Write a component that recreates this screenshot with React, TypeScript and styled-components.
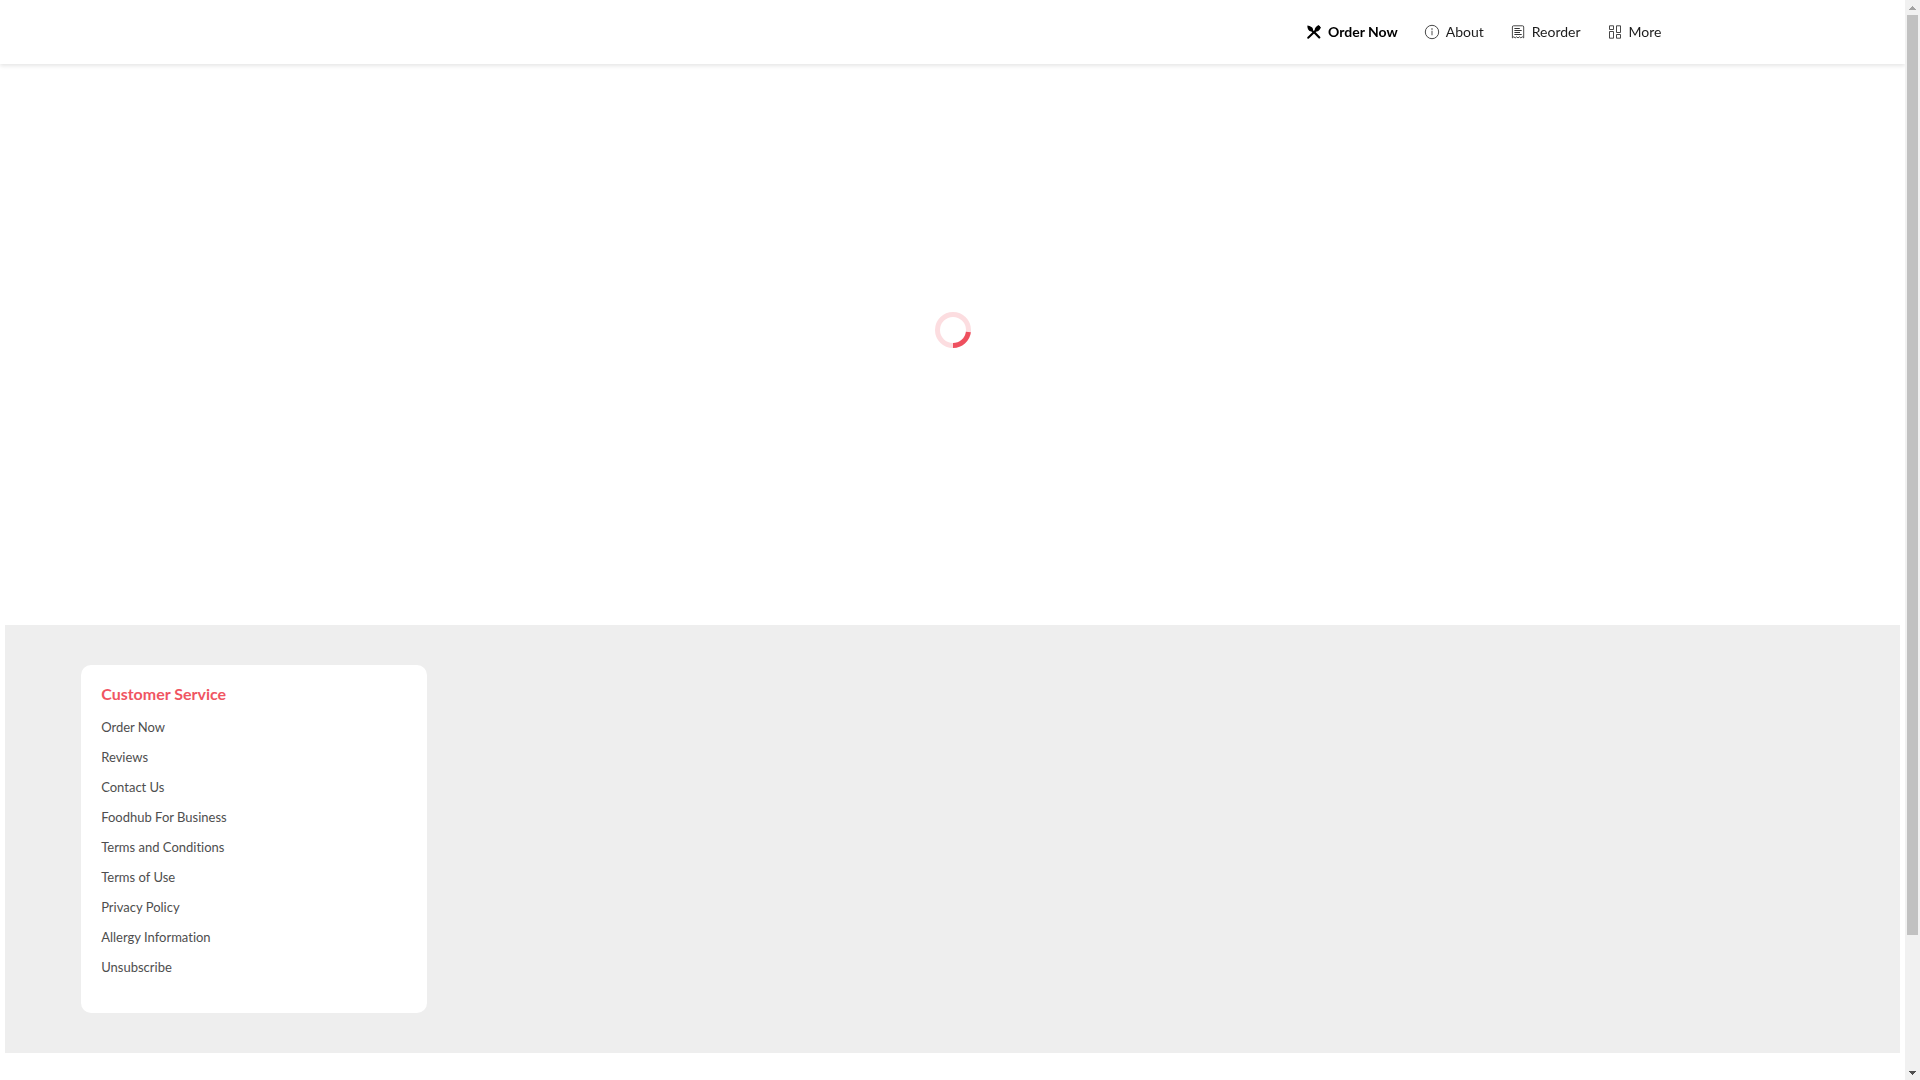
import React, { useEffect, useRef, useState } from "react";
import styled, { createGlobalStyle, keyframes } from "styled-components";

const GlobalStyle = createGlobalStyle`
  *, *::before, *::after { box-sizing: border-box; }
  body {
    margin: 0;
    background: #fff;
    font-family: Lato, "Open Sans", sans-serif;
    font-variant-ligatures: none;
  }
`;

const Shell = styled.div`
  display: grid;
  grid-template-columns: minmax(0, 1fr) 15px;
  height: 100vh;
`;

const Page = styled.div`
  display: flex;
  flex-direction: column;
  overflow-y: auto;
  scrollbar-width: none;
`;

const Header = styled.header`
  flex: none;
  position: sticky;
  top: 0;
  background: #fff;
  box-shadow: 0 2px 4px rgba(0, 0, 0, 0.1);
`;

const Nav = styled.nav`
  display: flex;
  align-items: center;
  justify-content: flex-end;
  gap: 26px;
  max-width: 1440px;
  height: 64px;
  margin: 0 auto;
  padding: 0 11px;
`;

const NavLink = styled.a<{ $active?: boolean }>`
  display: flex;
  align-items: center;
  gap: 6px;
  color: ${(p) => (p.$active ? "#000" : "#1c1c1c")};
  font-size: 14px;
  font-weight: ${(p) => (p.$active ? 700 : 400)};
  line-height: 20px;
  text-decoration: none;
`;

const Icon = styled.svg`
  display: block;
  width: 16px;
  height: 16px;
  fill: none;
  stroke: #333;
  stroke-width: 1;
`;

const Main = styled.main`
  flex: none;
  display: flex;
  justify-content: center;
  height: 561px;
  padding-top: 248px;
`;

const turn = keyframes`
  to { transform: rotate(360deg); }
`;

const Spinner = styled.svg`
  width: 36px;
  height: 36px;
  fill: none;
  stroke-width: 5;
  animation: ${turn} 1s linear infinite paused;
`;

const Footer = styled.footer`
  flex: none;
  margin: 0 5px 180px;
  padding: 40px 4%;
  background: #eee;
`;

const Card = styled.section`
  width: 346px;
  max-width: 100%;
  padding: 15px 20px 31px;
  border-radius: 10px;
  background: #fff;
`;

const CardTitle = styled.h2`
  margin: 0 0 4px;
  color: #f05562;
  font-size: 16px;
  font-weight: 700;
  line-height: 28px;
`;

const LinkList = styled.ul`
  margin: 0;
  padding: 0;
  list-style: none;
`;

const FooterLink = styled.a`
  display: block;
  color: #4e4e4e;
  font-size: 13px;
  line-height: 30px;
  text-decoration: none;
`;

const Bar = styled.div`
  display: grid;
  grid-template-rows: 15px minmax(0, 1fr) 15px;
  background: #f1f1f1;
`;

const BarButton = styled.button`
  display: flex;
  align-items: center;
  justify-content: center;
  padding: 0;
  border: 0;
  background: transparent;
`;

const Track = styled.div`
  display: flex;
  flex-direction: column;
  align-items: center;
`;

const Before = styled.div`
  flex: none;
`;

const Thumb = styled.div`
  flex: none;
  width: 11px;
  background: #c1c1c1;
`;

const links = [
  "Order Now",
  "Reviews",
  "Contact Us",
  "Foodhub For Business",
  "Terms and Conditions",
  "Terms of Use",
  "Privacy Policy",
  "Allergy Information",
  "Unsubscribe",
];

export default function App() {
  const page = useRef<HTMLDivElement>(null);
  const [scroll, setScroll] = useState({ size: 100, top: 0 });

  const measure = () => {
    const el = page.current;
    if (!el) return;
    setScroll({
      size: (el.clientHeight / el.scrollHeight) * 100,
      top: (el.scrollTop / el.scrollHeight) * 100,
    });
  };

  useEffect(() => {
    measure();
    window.addEventListener("resize", measure);
    return () => window.removeEventListener("resize", measure);
  }, []);

  const step = (by: number) => page.current?.scrollBy({ top: by });

  return (
    <Shell>
      <GlobalStyle />
      <Page ref={page} onScroll={measure}>
        <Header>
          <Nav>
            <NavLink href="#order" $active>
              <Icon viewBox="0 0 16 16" aria-hidden="true">
                <g stroke="#000" strokeLinecap="round">
                  <path d="M8 8L13.3 13.4" strokeWidth="2.2" />
                  <path d="M2.2 13.7L10.5 5.8" strokeWidth="2" />
                  <path d="M1.4 1.6L3.6 1.9L6.2 3.4Q7.4 4.8 7 6.2L8.4 7.6L7 9L5.4 7.5Q3.2 7.4 2 5.2Q1.2 3.4 1.4 1.6Z" fill="#000" stroke="none" />
                  <path d="M9 7.2Q8 4.7 9.9 3L12.4 1L13.2 1.8L14 1.9L14.1 2.7L15 3.5L13.4 5.9Q11.4 8.2 9 7.2Z" fill="#000" stroke="none" />
                </g>
              </Icon>
              Order Now
            </NavLink>
            <NavLink href="#about">
              <Icon viewBox="0 0 16 16" aria-hidden="true">
                <circle cx="8" cy="8" r="6.7" strokeWidth="0.9" />
                <path d="M8 4.3V5.7" stroke="#777" strokeWidth="1.6" />
                <path d="M8 6.7V11.3" stroke="#888" strokeWidth="1.5" />
              </Icon>
              About
            </NavLink>
            <NavLink href="#reorder">
              <Icon viewBox="0 0 16 16" aria-hidden="true">
                <path
                  strokeWidth="0.9"
                  d="M3.5 1.8H12.5Q13.7 1.8 13.7 3V13.9L12.3 12.8L10.9 13.9L9.5 12.8L8 13.9L6.6 12.8L5.2 13.9L3.8 12.8L2.4 13.9V3Q2.4 1.8 3.5 1.8Z"
                />
                <path d="M4.4 4.5H9.8M4.4 6.5H11.7M4.4 8.5H10M4.4 10.5H11.7" />
              </Icon>
              Reorder
            </NavLink>
            <NavLink href="#more">
              <Icon viewBox="0 0 16 16" aria-hidden="true">
                <path
                  strokeWidth="0.9"
                  d="M2.5 1.8H6.5V5.5H2.5ZM2.5 7.5H6.5V14.2H2.5ZM9.5 1.8H13.5V8.5H9.5ZM9.5 10.5H13.5V14.2H9.5Z"
                />
              </Icon>
              More
            </NavLink>
          </Nav>
        </Header>
        <Main>
          <Spinner viewBox="0 0 36 36" role="img" aria-label="Loading">
            <circle cx="18" cy="18" r="15.5" stroke="#fcdde0" />
            <path d="M33.4 20A15.5 15.5 0 0 1 18 33.5" stroke="#ee4f5e" />
          </Spinner>
        </Main>
        <Footer>
          <Card>
            <CardTitle>Customer Service</CardTitle>
            <LinkList>
              {links.map((label) => (
                <li key={label}>
                  <FooterLink href={"#" + label.toLowerCase().replace(/ /g, "-")}>{label}</FooterLink>
                </li>
              ))}
            </LinkList>
          </Card>
        </Footer>
      </Page>
      <Bar>
        <BarButton type="button" aria-label="Scroll up" onClick={() => step(-40)}>
          <svg width="7" height="4" viewBox="0 0 7 4" shapeRendering="crispEdges" fill="#a3a3a3">
            <path d="M3 0H4V1H5V2H6V3H7V4H0V3H1V2H2V1H3Z" />
          </svg>
        </BarButton>
        <Track>
          <Before style={{ height: `${scroll.top}%` }} />
          <Thumb style={{ height: `${scroll.size}%` }} />
        </Track>
        <BarButton type="button" aria-label="Scroll down" onClick={() => step(40)}>
          <svg width="7" height="4" viewBox="0 0 7 4" shapeRendering="crispEdges" fill="#505050">
            <path d="M0 0H7V1H6V2H5V3H4V4H3V3H2V2H1V1H0Z" />
          </svg>
        </BarButton>
      </Bar>
    </Shell>
  );
}
